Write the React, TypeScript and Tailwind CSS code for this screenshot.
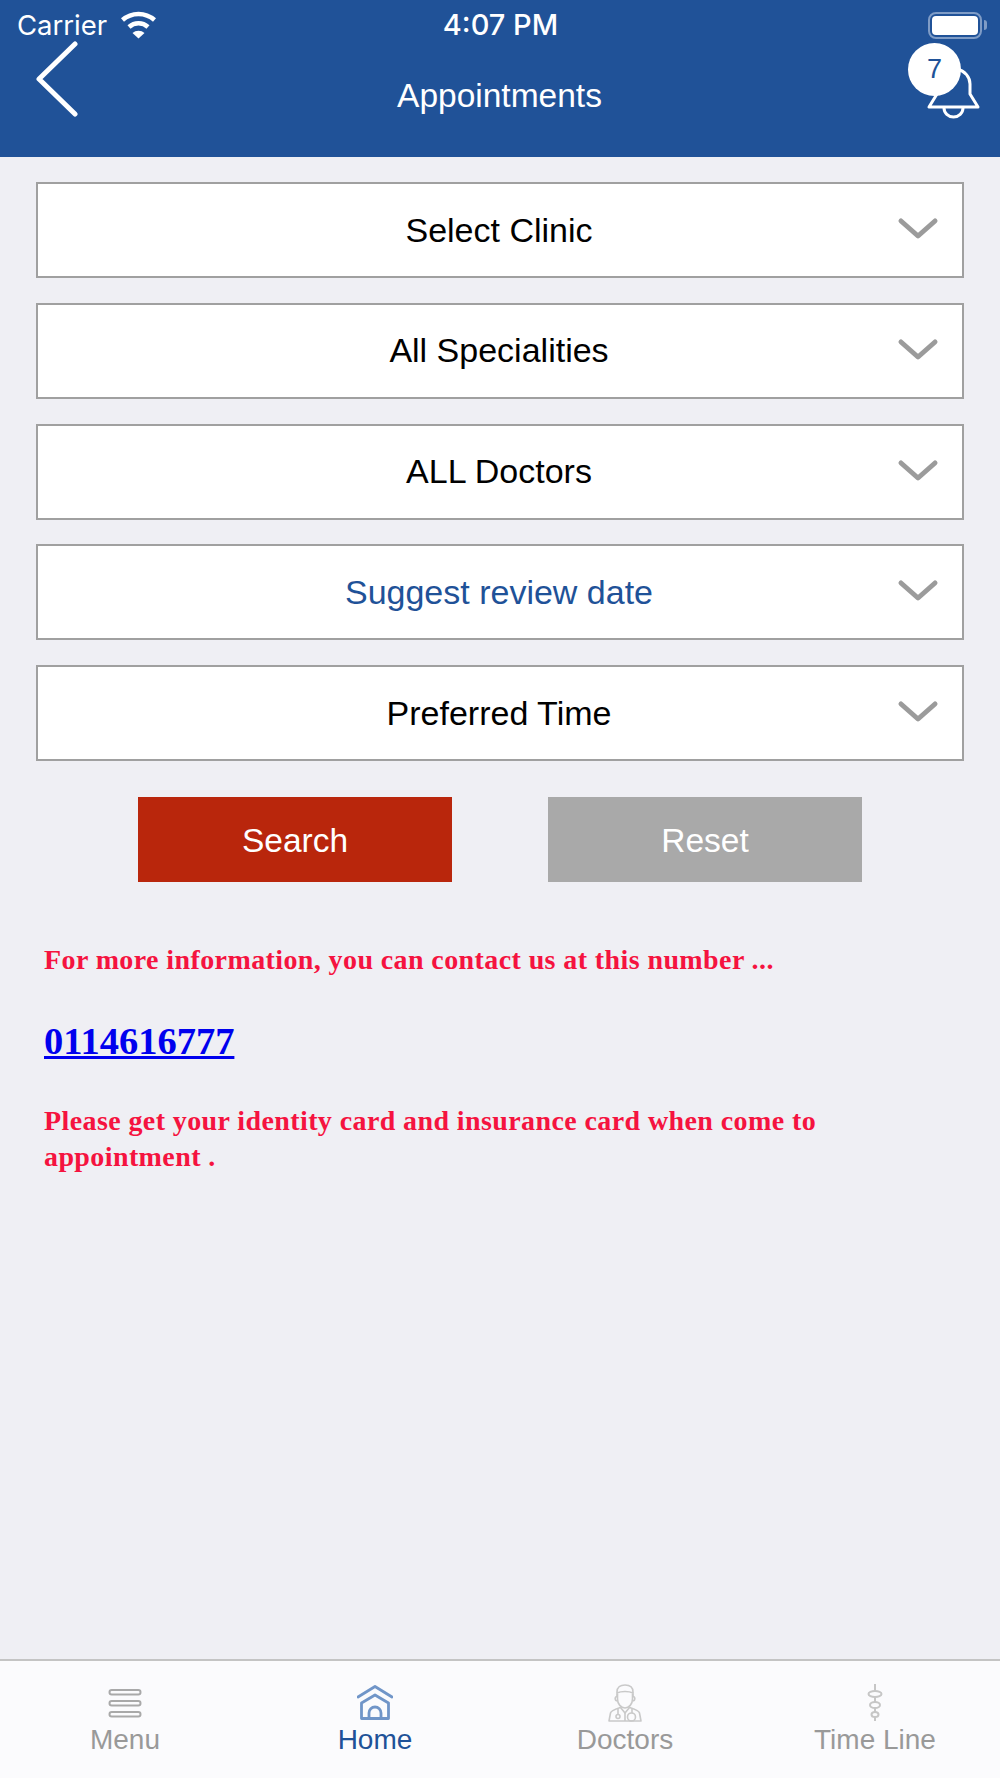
import React from "react";

const sans = "font-['Liberation_Sans',Arial,sans-serif]";
const serif = "font-['Liberation_Serif','Times_New_Roman',serif]";

function Chevron() {
  return (
    <svg width="44" height="28" viewBox="0 0 44 28" className="absolute right-[21px] top-[32px]">
      <path d="M4 5 L21 20 L38 5" fill="none" stroke="#9b9b9b" strokeWidth="5" strokeLinecap="round" strokeLinejoin="round" />
    </svg>
  );
}

function Select({ label, blue }: { label: string; blue?: boolean }) {
  return (
    <div className={`relative h-[96px] w-full border-2 border-[#a0a0a0] bg-white flex items-center justify-center text-[34px] ${blue ? "text-[#1f5298]" : "text-black"}`}>
      <span className="pr-[2px]">{label}</span>
      <Chevron />
    </div>
  );
}

function MenuIcon() {
  return (
    <svg width="36" height="32" viewBox="0 0 36 32">
      <g fill="none" stroke="#a9a9a9" strokeWidth="2">
        <rect x="2.500" y="3" width="31" height="4.500" rx="2.250" />
        <rect x="2.500" y="14" width="31" height="4.500" rx="2.250" />
        <rect x="2.500" y="25" width="31" height="4.500" rx="2.250" />
      </g>
    </svg>
  );
}

function HomeIcon() {
  return (
    <svg width="36" height="36" viewBox="0 0 36 36">
      <g fill="none" stroke="#7095c8" strokeWidth="2.800" strokeLinejoin="round">
        <path d="M1 12 L18 1.500 L35 12" strokeLinecap="round" />
        <path d="M4.500 33.500 V18 L18 10 L31.500 18 V33.500 Z" />
        <path d="M12 33.500 V28 A6 6 0 0 1 24 28 V33.500" />
      </g>
    </svg>
  );
}

function DoctorIcon() {
  return (
    <svg width="34" height="38" viewBox="0 0 34 38">
      <g fill="none" stroke="#c9c9c9" strokeWidth="1.600" strokeLinejoin="round">
        <path d="M9 12 V8 C9 3 12.500 1 17 1 C21.500 1 25 3 25 8 V12" />
        <path d="M9 9 C13 7 21 7 25 9" />
        <path d="M9.500 10 V15 C9.500 20 13 24 17 24 C21 24 24.500 20 24.500 15 V10" />
        <path d="M9 12.500 C6.500 12.500 6.500 17 9.500 17 M25 12.500 C27.500 12.500 27.500 17 24.500 17" />
        <path d="M1 37 L2.500 29 C3 26.500 8 25 12.500 23.500 L17 29 L21.500 23.500 C26 25 31 26.500 31.500 29 L33 37 Z" />
        <path d="M10 25 V31" />
        <circle cx="10" cy="32.500" r="2" />
        <path d="M24 25 V29" />
        <circle cx="23.500" cy="33" r="4" />
        <path d="M17 29 V37" />
      </g>
    </svg>
  );
}

function TimelineIcon() {
  return (
    <svg width="18" height="38" viewBox="0 0 18 38">
      <g fill="none" stroke="#c6c6c6" strokeWidth="2">
        <path d="M9 0 V7 M9 13 V18 M9 24 V28 M9 33 V37" />
        <ellipse cx="9" cy="10" rx="6.500" ry="3" />
        <ellipse cx="9" cy="21" rx="5" ry="3" />
        <ellipse cx="9" cy="30.500" rx="3.500" ry="2.500" />
      </g>
    </svg>
  );
}

function Tab({ icon, label, active }: { icon: React.ReactNode; label: string; active?: boolean }) {
  return (
    <div className="flex flex-col items-center">
      <div className="h-[38px] flex items-center justify-center">{icon}</div>
      <div className={`text-[28px] leading-[30px] mt-[3px] ${active ? "text-[#1f5298]" : "text-[#999999]"}`}>{label}</div>
    </div>
  );
}

export default function App() {
  return (
    <div className={`${sans} h-[1778px] w-[1000px] bg-[#efeff4] flex flex-col overflow-hidden`}>
      <header className="h-[157px] shrink-0 bg-[#205298] text-white">
        <div className="h-[42px] pt-[8px] pl-[17px] pr-[13px] grid grid-cols-3 items-center font-['Inter',sans-serif]">
          <div className="flex items-center gap-[13px] text-[27.5px] leading-[34px]">
            <span>Carrier</span>
            <svg width="37" height="28" viewBox="0 0 37 28">
              <g fill="none" stroke="#fff" strokeWidth="4.500">
                <path d="M2.500 9 A24 24 0 0 1 34.500 9" />
                <path d="M9 16 A14 14 0 0 1 28 16" />
              </g>
              <path d="M12.500 22 A9 9 0 0 1 24.500 22 L18.500 27.500 Z" fill="#fff" />
            </svg>
          </div>
          <div className="text-center text-[29px] font-medium leading-[34px] pr-[3px]">4:07 PM</div>
          <div className="flex justify-end items-center">
            <div className="h-[27px] w-[54px] rounded-[8px] border-2 border-[#7f9cc6] p-[2px]">
              <div className="h-full w-full rounded-[4px] bg-white" />
            </div>
            <div className="ml-[2px] h-[10px] w-[3px] rounded-r-[3px] bg-[#7f9cc6]" />
          </div>
        </div>
        <div className="h-[115px] pl-[35px] pr-[20px] flex items-start justify-between">
          <svg width="44" height="76" viewBox="0 0 44 76" className="shrink-0 -mt-[1px]">
            <path d="M40 3 L4 38 L40 73" fill="none" stroke="#fff" strokeWidth="5" strokeLinecap="round" strokeLinejoin="round" />
          </svg>
          <div className="flex-1 text-center text-[33.5px] leading-[40px] pt-[34px] pl-[12px] font-light">Appointments</div>
          <div className="relative h-[80px] w-[72px] shrink-0">
            <svg width="72" height="80" viewBox="0 0 72 80" className="absolute left-0 top-0">
              <g fill="none" stroke="#fff" strokeWidth="3" strokeLinejoin="round">
                <path d="M21 65 H70 L62 52 V42 C62 35 57 29 49 27 H40 C34 29 29 35 29 42 V52 Z" />
                <path d="M36 66 A9.500 9 0 0 0 55 66" />
              </g>
            </svg>
            <div className="absolute left-0 top-[1px] flex h-[53px] w-[53px] items-center justify-center rounded-full bg-white text-[27px] text-[#205298]">7</div>
          </div>
        </div>
      </header>

      <main className="flex-1 pt-[25px]">
        <div className="px-[36px] flex flex-col gap-[24.75px]">
          <Select label="Select Clinic" />
          <Select label="All Specialities" />
          <Select label="ALL Doctors" />
          <Select label="Suggest review date" blue />
          <Select label="Preferred Time" />
        </div>
        <div className="mt-[36px] flex justify-center gap-[96px] text-[33.5px] text-white">
          <div className="h-[85px] w-[314px] bg-[#b9260c] flex items-center justify-center pt-[3px]">Search</div>
          <div className="h-[85px] w-[314px] bg-[#a9a9a9] flex items-center justify-center pt-[3px]">Reset</div>
        </div>
        <div className={`${serif} px-[44px] mt-[60px] font-bold`}>
          <p className="text-[28px] leading-[36px] tracking-[0.4px] text-[#f5133f]">For more information, you can contact us at this number ...</p>
          <p className="mt-[39px] text-[38.5px] leading-[48px]">
            <a href="#" className="text-[#0000ee] underline">0114616777</a>
          </p>
          <p className="mt-[38px] text-[28px] leading-[36px] tracking-[0.4px] text-[#f5133f] w-[860px]">Please get your identity card and insurance card when come to appointment .</p>
        </div>
      </main>

      <nav className="h-[119px] shrink-0 border-t-2 border-[#c4c4c4] bg-[#fbfbfd] grid grid-cols-4 pt-[23px]">
        <Tab icon={<MenuIcon />} label="Menu" />
        <Tab icon={<HomeIcon />} label="Home" active />
        <Tab icon={<DoctorIcon />} label="Doctors" />
        <Tab icon={<TimelineIcon />} label="Time Line" />
      </nav>
    </div>
  );
}
